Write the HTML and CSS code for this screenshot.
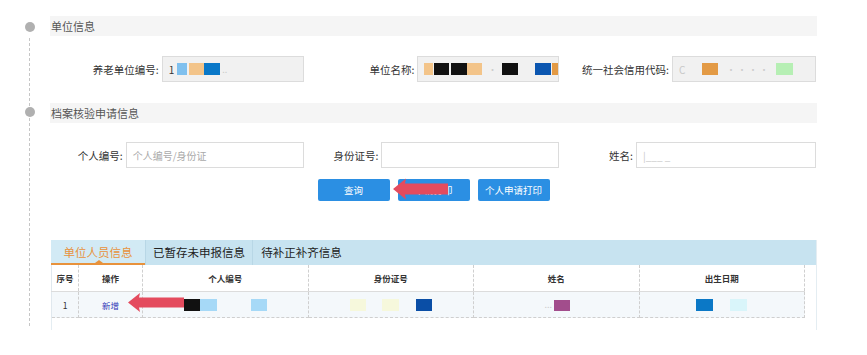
FILE: index.html
```html
<!DOCTYPE html>
<html lang="zh-CN">
<head>
    <meta charset="UTF-8">
    <meta name="viewport" content="width=device-width, initial-scale=1.0">
    <title>档案核验申请</title>
    <link rel="stylesheet" href="styles.css">
</head>
<body>
    <div class="page">
        <div class="section-title">单位信息</div>
        <div class="form-row">
            <div class="field">
                <label>养老单位编号:</label>
                <div class="input ro">
                    <span class="txt">1</span>
                    <span class="blob w10 c-sky"></span>
                    <span class="blob w15 c-peach g2"></span>
                    <span class="blob w16 c-blue"></span>
                    <span class="dots">..</span>
                </div>
            </div>
            <div class="field">
                <label>单位名称:</label>
                <div class="input ro">
                    <span class="blob w9 c-peach"></span>
                    <span class="blob w16 c-black g1"></span>
                    <span class="blob w16 c-black g2"></span>
                    <span class="blob w16 c-peach"></span>
                    <span class="dots gap">·</span>
                    <span class="blob w17 c-black"></span>
                    <span class="blob w16 c-navy g17"></span>
                    <span class="blob w7 c-orange g1"></span>
                </div>
            </div>
            <div class="field last">
                <label>统一社会信用代码:</label>
                <div class="input ro wide">
                    <span class="txt faint">C</span>
                    <span class="blob w16 c-orange g14"></span>
                    <span class="dots gap-l">· · · ·</span>
                    <span class="blob w17 c-green"></span>
                </div>
            </div>
        </div>

        <div class="section-title second">档案核验申请信息</div>
        <div class="form-row search">
            <div class="field">
                <label>个人编号:</label>
                <div class="input"><span class="placeholder">个人编号/身份证</span></div>
            </div>
            <div class="field">
                <label>身份证号:</label>
                <div class="input"></div>
            </div>
            <div class="field last">
                <label>姓名:</label>
                <div class="input wide"><span class="txt faint">|___ _</span></div>
            </div>
        </div>

        <div class="btns">
            <button class="btn">查询</button>
            <button class="btn">申请打印</button>
            <button class="btn">个人申请打印</button>
        </div>

        <div class="panel">
            <div class="tabs">
                <div class="tab active">单位人员信息</div>
                <div class="tab t2">已暂存未申报信息</div>
                <div class="tab t3">待补正补齐信息</div>
            </div>
            <table class="grid">
                <tr>
                    <th class="col-no">序号</th>
                    <th class="col-op">操作</th>
                    <th class="col-w">个人编号</th>
                    <th class="col-w">身份证号</th>
                    <th class="col-w">姓名</th>
                    <th class="col-w">出生日期</th>
                </tr>
                <tr>
                    <td>1</td>
                    <td><a class="link">新增</a></td>
                    <td><span class="blob w16 c-black"></span><span class="blob w17 c-lsky"></span><span class="blob w16 c-lsky g34"></span></td>
                    <td><span class="blob w16 c-cream"></span><span class="blob w17 c-cream g16"></span><span class="blob w16 c-dnavy g17"></span></td>
                    <td><span class="dots">...</span><span class="blob w16 c-purple tall"></span></td>
                    <td><span class="blob w17 c-mid"></span><span class="blob w17 c-cyan g17"></span></td>
                </tr>
            </table>
        </div>

        <svg class="arrow a1" width="55" height="22" viewBox="0 0 55 22">
            <polygon points="0,11 13,0.5 12,5.5 55,5.5 55,16.5 12,16.5 13,21.5" fill="#e44b5e"/>
        </svg>
        <svg class="arrow a2" width="56" height="21" viewBox="0 0 56 21">
            <polygon points="0,10.5 12,1 11,5.5 56,5.5 56,15.5 11,15.5 12,20" fill="#e44b5e"/>
        </svg>
    </div>
</body>
</html>
```

FILE: styles.css
```css
body {
    margin: 0;
    background: #fff;
    color: #333;
    font-family: "Noto Sans CJK SC", "Liberation Sans", sans-serif;
}

.page {
    position: relative;
    padding: 16px 50px 0 50px;
}

/* 좌측 타임라인 점선 */
.page::before {
    content: '';
    position: absolute;
    left: 29px;
    top: 38px;
    height: 288px;
    border-left: 1px dashed #c6c6c6;
}

.section-title {
    position: relative;
    height: 20px;
    line-height: 20px;
    background: #f5f5f5;
    font-size: 11px;
    color: #555;
    padding-left: 1px;
}

.section-title::before {
    content: '';
    position: absolute;
    left: -25px;
    top: 6px;
    width: 10px;
    height: 10px;
    border-radius: 50%;
    background: #b0b0b0;
}

.section-title.second {
    margin-top: 21px;
}

.section-title.second::before {
    top: 4px;
}

.form-row {
    display: grid;
    grid-template-columns: repeat(3, 1fr);
    margin-top: 20px;
}

.form-row.search {
    margin-top: 19px;
}

.field {
    display: flex;
    justify-content: flex-end;
    align-items: center;
    gap: 3px;
    padding-right: 2px;
    font-size: 10.5px;
}

.field.last {
    padding-right: 1px;
}

.field label {
    color: #333;
}

.input {
    box-sizing: border-box;
    width: 142px;
    height: 26px;
    border: 1px solid #dcdcdc;
    background: #fff;
    display: flex;
    align-items: center;
    padding-left: 6px;
    font-size: 10px;
    white-space: nowrap;
    overflow: hidden;
}

.input.ro {
    background: #f1f1f1;
}

.input.ro.wide {
    width: 144px;
}

.search .input {
    width: 178px;
}

.search .input.wide {
    width: 180px;
}

.placeholder {
    color: #aaa;
}

.txt {
    color: #333;
    margin-right: 3px;
}

.txt.faint {
    color: #c8c8c8;
}

.dots {
    color: #ccc;
    font-size: 9px;
    margin: 0 2px;
}

.dots.gap {
    margin: 0 5px 0 6px;
}

.dots.gap-l {
    margin: 0 8px;
}

/* 모자이크 처리된 값 */
.blob {
    display: inline-block;
    height: 12px;
    vertical-align: middle;
    filter: blur(0.5px);
}

.blob.tall { height: 11px; }

.w7 { width: 7px; }
.w9 { width: 9px; }
.w10 { width: 10px; }
.w15 { width: 15px; }
.w16 { width: 16px; }
.w17 { width: 17px; }

.g1 { margin-left: 1px; }
.g2 { margin-left: 2px; }
.g14 { margin-left: 14px; }
.g16 { margin-left: 16px; }
.g17 { margin-left: 17px; }
.g34 { margin-left: 34px; }

.c-sky { background: #7fc0ee; }
.c-lsky { background: #a6d9f7; }
.c-peach { background: #f3c489; }
.c-blue { background: #0a78c8; }
.c-navy { background: #0b56b0; }
.c-dnavy { background: #0a4ea6; }
.c-black { background: #111; }
.c-orange { background: #e39a45; }
.c-green { background: #b6efb4; }
.c-cream { background: #f6f8dc; }
.c-purple { background: #a24d8c; }
.c-mid { background: #0b78c6; }
.c-cyan { background: #d9f5fa; }

.btns {
    display: flex;
    justify-content: center;
    gap: 8px;
    margin-top: 11px;
}

.btn {
    width: 72px;
    height: 22px;
    border: none;
    border-radius: 2px;
    background: #2b8fe3;
    color: #fff;
    font-family: inherit;
    font-size: 9.5px;
    padding: 0;
}

.panel {
    margin-top: 39px;
    margin-left: 1px;
    border-left: 1px solid #e4edf2;
    border-right: 1px solid #e4edf2;
    padding-bottom: 12px;
}

.tabs {
    display: flex;
    height: 25px;
    background: #c7e3f0;
    margin-left: -1px;
}

.tab {
    line-height: 25px;
    text-align: center;
    font-size: 11.5px;
    color: #222;
    border-right: 1px solid #b8d7e6;
    box-sizing: border-box;
}

.tab.active {
    position: relative;
    width: 95px;
    color: #e8923c;
    background: #d2eaf5;
    box-shadow: inset 0 -2px #e8923c;
}

.tab.active::after {
    content: '';
    position: absolute;
    left: 44px;
    bottom: 2px;
    border-left: 4px solid transparent;
    border-right: 4px solid transparent;
    border-bottom: 3px solid #e8923c;
}

.tab.t2 {
    width: 107px;
}

.tab.t3 {
    width: 97px;
    border-right: none;
}

.grid {
    width: 754px;
    border-collapse: collapse;
    table-layout: fixed;
    font-size: 8.5px;
    margin-left: -1px;
}

.grid th,
.grid td {
    border: 1px dashed #cfcfcf;
    text-align: center;
    padding: 0;
    white-space: nowrap;
}

.grid tr:first-child th {
    border-top: none;
}

.grid th {
    height: 26px;
    font-weight: bold;
    color: #333;
    background: #fff;
    border-bottom: 1px solid #dcdcdc;
}

.grid td {
    height: 25px;
    background: #f4f8fb;
    color: #333;
}

.grid th:first-child,
.grid td:first-child {
    border-left: 1px solid #e0e8ee;
}

.col-no { width: 26px; }
.col-op { width: 63px; }

.link {
    color: #3339b8;
}

.arrow {
    position: absolute;
}

.arrow.a1 {
    left: 393px;
    top: 178px;
}

.arrow.a2 {
    left: 128px;
    top: 292px;
}
```
